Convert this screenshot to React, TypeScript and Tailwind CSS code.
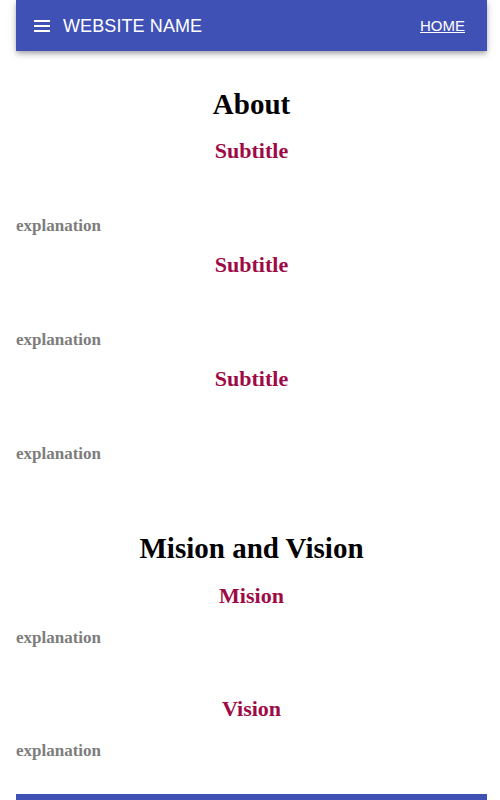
import React from "react";

const serif = "font-['Liberation_Serif','Times_New_Roman',serif] font-bold";

function Sub({ text, mt }: { text: string; mt: string }) {
  return (
    <h3 className={`${serif} ${mt} text-center text-[22px] leading-[22px] text-[#9e0a46]`}>{text}</h3>
  );
}

function Expl({ mt }: { mt: string }) {
  return (
    <p className={`${serif} ${mt} text-[17px] leading-[17px] text-[#7d7d7d]`}>explanation</p>
  );
}

export default function App() {
  return (
    <div className="w-[500px] min-h-[800px] bg-white overflow-hidden">
      <div className="ml-[16px] w-[471px]">
        <header className="h-[51px] bg-[#3f51b5] flex items-center pl-[18px] pr-[22px] text-white font-['Liberation_Sans',Arial,sans-serif] shadow-[0_2px_4px_-1px_rgba(0,0,0,0.2),0_4px_5px_0_rgba(0,0,0,0.14),0_1px_10px_0_rgba(0,0,0,0.12)]">
          <svg width="16" height="14" viewBox="0 0 16 14" className="mr-[13px]">
            <rect x="0" y="1" width="16" height="2" fill="white" />
            <rect x="0" y="6" width="16" height="2" fill="white" />
            <rect x="0" y="11" width="16" height="2" fill="white" />
          </svg>
          <span className="text-[18px] leading-none tracking-[0.1px]">WEBSITE NAME</span>
          <a className="ml-auto text-[15px] leading-none underline" href="#">HOME</a>
        </header>
        <main>
          <h1 className={`${serif} mt-[38.5px] text-center text-[29px] leading-[28px] text-black`}>About</h1>
          <Sub text="Subtitle" mt="mt-[22px]" />
          <Expl mt="mt-[55px]" />
          <Sub text="Subtitle" mt="mt-[20px]" />
          <Expl mt="mt-[55px]" />
          <Sub text="Subtitle" mt="mt-[20px]" />
          <Expl mt="mt-[55px]" />
          <h1 className={`${serif} mt-[72px] text-center text-[29px] leading-[28px] text-black`}>Mision and Vision</h1>
          <Sub text="Mision" mt="mt-[23px]" />
          <Expl mt="mt-[22px]" />
          <Sub text="Vision" mt="mt-[52.5px]" />
          <Expl mt="mt-[21.5px]" />
        </main>
        <footer className="mt-[35px] h-[20px] bg-[#3f51b5]" />
      </div>
    </div>
  );
}
